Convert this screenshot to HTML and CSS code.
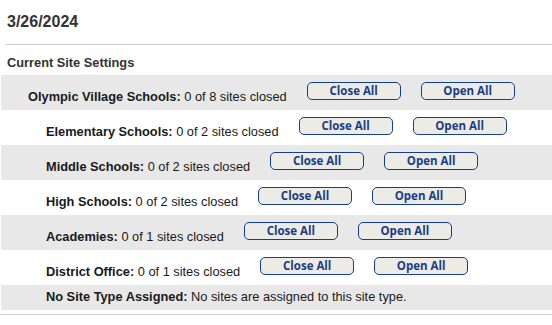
FILE: index.html
```html
<!DOCTYPE html>
<html>
<head>
<meta charset="utf-8">
<link rel="stylesheet" href="styles.css">
</head>
<body>
<div class="date">3/26/2024</div>
<div class="rule"></div>
<div class="section-title">Current Site Settings</div>
<div class="rows">
  <div class="row gray top-level">
    <div class="label"><b>Olympic Village Schools:</b> 0 of 8 sites closed</div>
    <button class="btn">Close All</button>
    <button class="btn">Open All</button>
  </div>
  <div class="row">
    <div class="label"><b>Elementary Schools:</b> 0 of 2 sites closed</div>
    <button class="btn">Close All</button>
    <button class="btn">Open All</button>
  </div>
  <div class="row gray">
    <div class="label"><b>Middle Schools:</b> 0 of 2 sites closed</div>
    <button class="btn">Close All</button>
    <button class="btn">Open All</button>
  </div>
  <div class="row">
    <div class="label"><b>High Schools:</b> 0 of 2 sites closed</div>
    <button class="btn">Close All</button>
    <button class="btn">Open All</button>
  </div>
  <div class="row gray">
    <div class="label"><b>Academies:</b> 0 of 1 sites closed</div>
    <button class="btn">Close All</button>
    <button class="btn">Open All</button>
  </div>
  <div class="row">
    <div class="label"><b>District Office:</b> 0 of 1 sites closed</div>
    <button class="btn">Close All</button>
    <button class="btn">Open All</button>
  </div>
  <div class="row gray short">
    <div class="label"><b>No Site Type Assigned:</b> No sites are assigned to this site type.</div>
  </div>
</div>
<div class="rule bottom"></div>
</body>
</html>
```

FILE: styles.css
```css
html, body {
  margin: 0;
  padding: 0;
  background: #fff;
}
body {
  font-family: "Liberation Sans", Arial, sans-serif;
  color: #1a1a1a;
  width: 552px;
  overflow: hidden;
}
.date {
  font-size: 16px;
  font-weight: bold;
  line-height: 18px;
  color: #333;
  padding: 13px 0 0 7px;
}
.rule {
  height: 1px;
  background: #cfcfcf;
  margin: 13px 0 0 6px;
}
.rule.bottom {
  margin: 4px 0 0 0;
}
.section-title {
  font-size: 12.8px;
  font-weight: bold;
  line-height: 15px;
  color: #333;
  padding: 10px 0 0 7px;
  margin-bottom: 5px;
}
.rows {
  margin-left: 1px;
}
.row {
  display: flex;
  align-items: flex-start;
  height: 35px;
  box-sizing: border-box;
  padding-left: 45px;
}
.row.top-level {
  padding-left: 27px;
}
.row.gray {
  background: #e8e8e8;
}
.row.short {
  height: 25px;
}
.label {
  font-size: 12.8px;
  line-height: 15px;
  margin-top: 14px;
  white-space: nowrap;
}
.row.short .label {
  margin-top: 4px;
}
.btn {
  width: 94px;
  height: 18px;
  margin: 7px 0 0 20px;
  padding: 0;
  box-sizing: border-box;
  border: 1.5px solid #173e8e;
  border-radius: 5px;
  background: #ecebe6;
  color: #1b3c86;
  font-family: "Open Sans", "Noto Sans", sans-serif;
  font-weight: bold;
  font-size: 11.5px;
  line-height: 14px;
}
```
